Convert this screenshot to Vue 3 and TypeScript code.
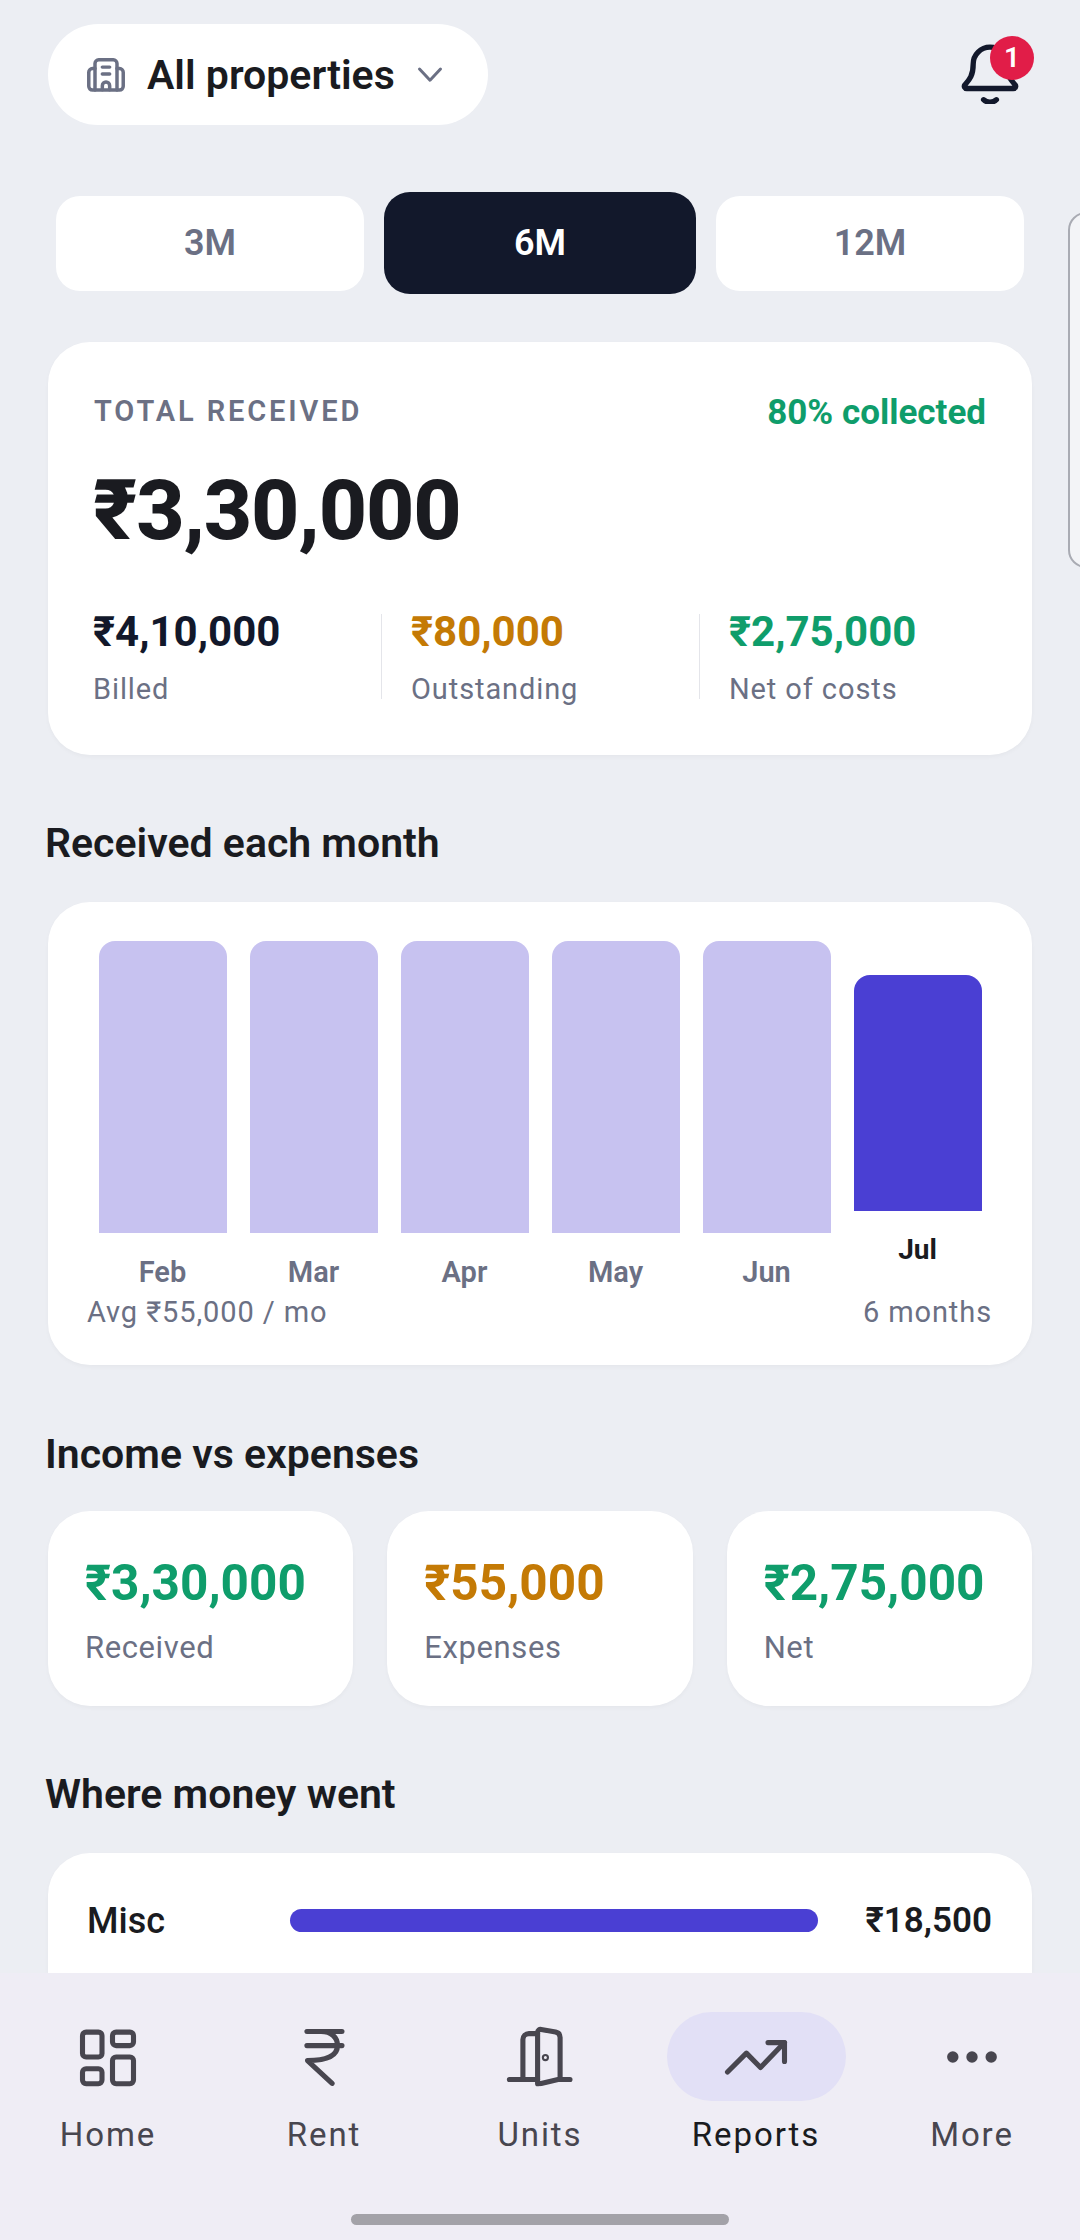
<script setup lang="ts">
type Bar = { label: string; value: number; current?: boolean }
type Tile = { value: string; label: string; tone: string }
type NavItem = { key: string; label: string; active?: boolean }

const ranges = ['3M', '6M', '12M']
const activeRange = '6M'

const splits: Tile[] = [
  { value: '₹4,10,000', label: 'Billed', tone: 'navy' },
  { value: '₹80,000', label: 'Outstanding', tone: 'amber' },
  { value: '₹2,75,000', label: 'Net of costs', tone: 'green' }
]

const bars: Bar[] = [
  { label: 'Feb', value: 55000 },
  { label: 'Mar', value: 55000 },
  { label: 'Apr', value: 55000 },
  { label: 'May', value: 55000 },
  { label: 'Jun', value: 55000 },
  { label: 'Jul', value: 44500, current: true }
]

const BAR_MAX = 292
const barHeight = (v: number) => `${Math.round((v / 55000) * BAR_MAX)}px`

const tiles: Tile[] = [
  { value: '₹3,30,000', label: 'Received', tone: 'green' },
  { value: '₹55,000', label: 'Expenses', tone: 'amber' },
  { value: '₹2,75,000', label: 'Net', tone: 'green' }
]

const nav: NavItem[] = [
  { key: 'home', label: 'Home' },
  { key: 'rent', label: 'Rent' },
  { key: 'units', label: 'Units' },
  { key: 'reports', label: 'Reports', active: true },
  { key: 'more', label: 'More' }
]
</script>

<template>
  <div class="screen">
    <main class="content">
      <header class="topbar">
        <button class="picker" type="button">
          <svg class="picker-icon" viewBox="0 0 24 24" fill="none" stroke="currentColor" stroke-width="1.900" stroke-linecap="round" stroke-linejoin="round">
            <path d="M6 20.200V5.700a2 2 0 0 1 2-2h8a2 2 0 0 1 2 2v14.500" />
            <path d="M6 8.500H4.600a2 2 0 0 0-2 2v7.700a2 2 0 0 0 2 2h14.800a2 2 0 0 0 2-2v-7.700a2 2 0 0 0-2-2H18" />
            <path d="M10 7.700h4M10 11.500h4M10 20v-2.200a2 2 0 0 1 4 0V20" />
          </svg>
          <span>All properties</span>
          <svg class="picker-chevron" viewBox="0 0 24 24" fill="none" stroke="currentColor" stroke-width="2" stroke-linecap="round" stroke-linejoin="round">
            <path d="m5 8 7 7.500 7-7.500" />
          </svg>
        </button>
        <div class="bell">
          <svg viewBox="0 0 24 24" fill="none" stroke="currentColor" stroke-width="2" stroke-linecap="round" stroke-linejoin="round">
            <path d="M2.600 16.800c-.5.6-.1 1.400.7 1.400h17.400c.8 0 1.200-.8.7-1.400C19.800 15 18.300 13.500 18.300 9a6.300 6.300 0 0 0-12.600 0c0 4.500-1.500 6-3.100 7.800Z" />
            <path d="M9.600 22.400c1.200 1.200 3.600 1.200 4.800 0" />
          </svg>
          <span class="bell-badge">1</span>
        </div>
      </header>

      <div class="ranges">
        <button
          v-for="r in ranges"
          :key="r"
          type="button"
          class="range"
          :class="{ active: r === activeRange }"
        >
          {{ r }}
        </button>
      </div>
      <div class="peek"></div>

      <section class="card hero">
        <div class="hero-top">
          <span class="eyebrow">TOTAL RECEIVED</span>
          <span class="collected">80% collected</span>
        </div>
        <div class="hero-value">₹3,30,000</div>
        <div class="splits">
          <div v-for="s in splits" :key="s.label" class="split">
            <strong :class="s.tone">{{ s.value }}</strong>
            <span>{{ s.label }}</span>
          </div>
        </div>
      </section>

      <h2 class="heading heading-months">Received each month</h2>
      <section class="card chart">
        <div class="bars">
          <div v-for="b in bars" :key="b.label" class="bar-col" :class="{ current: b.current }">
            <div class="bar" :style="{ height: barHeight(b.value) }"></div>
            <span class="bar-label">{{ b.label }}</span>
          </div>
        </div>
        <div class="chart-foot">
          <span>Avg ₹55,000 / mo</span>
          <span>6 months</span>
        </div>
      </section>

      <h2 class="heading heading-income">Income vs expenses</h2>
      <div class="tiles">
        <div v-for="t in tiles" :key="t.label" class="card tile">
          <strong :class="t.tone">{{ t.value }}</strong>
          <span>{{ t.label }}</span>
        </div>
      </div>

      <h2 class="heading heading-money">Where money went</h2>
      <section class="card money">
        <div class="money-row">
          <span class="money-name">Misc</span>
          <div class="money-track"></div>
          <span class="money-amount">₹18,500</span>
        </div>
      </section>
    </main>

    <nav class="nav">
      <div class="nav-items">
        <div v-for="n in nav" :key="n.key" class="nav-item" :class="{ active: n.active }">
          <div class="nav-icon">
            <svg v-if="n.key === 'home'" viewBox="0 0 24 24" fill="none" stroke="currentColor" stroke-width="1.700" stroke-linecap="round" stroke-linejoin="round">
              <rect x="3.500" y="3.700" width="6.500" height="8.300" rx="1.200" />
              <rect x="13.500" y="3.700" width="7" height="4.500" rx="1.200" />
              <rect x="13.500" y="12" width="7" height="8.900" rx="1.200" />
              <rect x="3.500" y="15.900" width="6.500" height="5" rx="1.200" />
            </svg>
            <svg v-else-if="n.key === 'rent'" viewBox="0 0 24 24" fill="none" stroke="currentColor" stroke-width="1.700" stroke-linecap="round" stroke-linejoin="round">
              <path d="M6.300 3.500H18M6.300 8.200H18M11 3.500c3.500 0 5.500 2 5.500 4.700s-2.500 5-10 5l8.200 7.600" />
            </svg>
            <svg v-else-if="n.key === 'units'" viewBox="0 0 24 24" fill="none" stroke="currentColor" stroke-width="1.700" stroke-linecap="round" stroke-linejoin="round">
              <path d="M1.800 19.500h9.400M18.700 19.500H22" />
              <path d="M6.300 19.500V6.200a2 2 0 0 1 2-2h2.900" />
              <path d="M11.200 20.900V3.800c0-.7.6-1.100 1.200-1l4.800.9c.9.2 1.500.9 1.500 1.800v13.800l-6.300 1.500c-.7.2-1.200-.1-1.200-.8Z" />
              <circle cx="13.800" cy="12.200" r=".35" />
            </svg>
            <svg v-else-if="n.key === 'reports'" viewBox="0 0 24 24" fill="none" stroke="currentColor" stroke-width="1.700" stroke-linecap="round" stroke-linejoin="round">
              <path d="M2.500 17 8.800 10.700 13.500 15.500 21.500 7.200" />
              <path d="M16 7.200h5.500v6.300" />
            </svg>
            <svg v-else viewBox="0 0 24 24" fill="currentColor">
              <circle cx="5.600" cy="12" r="1.900" />
              <circle cx="12" cy="12" r="1.900" />
              <circle cx="18.400" cy="12" r="1.900" />
            </svg>
          </div>
          <span class="nav-label">{{ n.label }}</span>
        </div>
      </div>
      <div class="home-indicator"></div>
    </nav>
  </div>
</template>

<style>
body {
  margin: 0;
}
</style>

<style scoped>
.screen {
  position: relative;
  width: 1080px;
  height: 2240px;
  display: flex;
  flex-direction: column;
  overflow: hidden;
  background: #eceef3;
  color: #1a1b20;
  font-family: Roboto, 'Liberation Sans', sans-serif;
}
.content {
  position: relative;
  flex: 1;
  min-height: 0;
  overflow: hidden;
  padding: 24px 48px 0;
}
.topbar {
  display: flex;
  align-items: flex-start;
  justify-content: space-between;
}
.picker {
  display: flex;
  align-items: center;
  width: 440px;
  height: 101px;
  padding: 0 0 0 36px;
  border: 0;
  border-radius: 51px;
  background: #fff;
  font: 600 41px Roboto, sans-serif;
  color: #1a1b20;
}
.picker-icon {
  width: 44px;
  height: 44px;
  color: #6b7084;
  margin-right: 19px;
}
.picker-chevron {
  width: 36px;
  height: 36px;
  color: #6b7084;
  margin-left: 17px;
}
.bell {
  position: relative;
  width: 64px;
  height: 64px;
  margin: 16px 10px 0 0;
  color: #12182b;
}
.bell svg {
  width: 64px;
  height: 64px;
  display: block;
}
.bell-badge {
  position: absolute;
  top: -4px;
  right: -12px;
  width: 44px;
  height: 44px;
  border-radius: 50%;
  background: #e11d48;
  color: #fff;
  font-size: 28px;
  font-weight: 600;
  line-height: 44px;
  text-align: center;
}
.ranges {
  display: flex;
  align-items: center;
  gap: 20px;
  height: 102px;
  margin: 67px 0 0 8px;
}
.range {
  width: 308px;
  height: 95px;
  border: 0;
  border-radius: 24px;
  background: #fff;
  color: #6b7084;
  font: 600 36px Roboto, sans-serif;
}
.range.active {
  width: 312px;
  height: 102px;
  border-radius: 26px;
  background: #12182b;
  color: #fff;
}
.peek {
  position: absolute;
  left: 1068px;
  top: 212px;
  width: 60px;
  height: 356px;
  box-sizing: border-box;
  border: 2px solid #a9abb3;
  border-radius: 18px;
  background: #f3f4f7;
}
.card {
  background: #fff;
  border-radius: 42px;
  box-shadow: 0 2px 4px rgba(18, 24, 43, 0.03);
}
.hero {
  height: 413px;
  box-sizing: border-box;
  margin-top: 48px;
  padding: 54px 46px 0;
}
.hero-top {
  display: flex;
  align-items: center;
  justify-content: space-between;
  height: 30px;
}
.eyebrow {
  font-size: 29px;
  font-weight: 600;
  letter-spacing: 2.900px;
  color: #6b7084;
}
.collected {
  padding-top: 3px;
  font-size: 35px;
  font-weight: 700;
  color: #0f9d6b;
}
.hero-value {
  margin-top: 35px;
  margin-left: -1px;
  font-size: 84px;
  font-weight: 800;
  line-height: 100px;
  letter-spacing: -1.200px;
  color: #1a1b20;
}
.splits {
  display: grid;
  grid-template-columns: 288px 318px 1fr;
  margin: 53px 0 0 -1px;
}
.split {
  display: flex;
  flex-direction: column;
  height: 85px;
}
.split + .split {
  padding-left: 29px;
  border-left: 1px solid #e4e5ea;
}
.split strong {
  font-size: 42px;
  font-weight: 700;
  line-height: 36px;
}
.split span {
  margin-top: 22px;
  font-size: 29px;
  line-height: 34px;
  letter-spacing: 0.900px;
  color: #6b7084;
}
.navy {
  color: #12182b;
}
.amber {
  color: #c47a05;
}
.green {
  color: #0f9d6b;
}
.heading {
  margin: 0;
  font-size: 41px;
  font-weight: 600;
  line-height: 46px;
  color: #1a1b20;
}
.heading-months {
  margin: 65px 0 0 -3px;
}
.chart {
  height: 463px;
  box-sizing: border-box;
  margin-top: 36px;
  padding: 39px 40px 0;
}
.bars {
  display: flex;
  gap: 23px;
  height: 352px;
  padding: 0 10.500px;
}
.bar-col {
  flex: 1;
  display: flex;
  flex-direction: column;
  align-items: center;
}
.bar-col.current {
  margin-top: 34px;
}
.bar {
  width: 100%;
  border-radius: 16px 16px 0 0;
  background: #c7c2f0;
}
.current .bar {
  background: #4a3fd3;
}
.bar-label {
  margin-top: 22px;
  font-size: 29px;
  font-weight: 600;
  line-height: 34px;
  color: #6b7084;
}
.current .bar-label {
  color: #1a1b20;
  font-weight: 700;
  font-size: 28px;
}
.chart-foot {
  display: flex;
  justify-content: space-between;
  margin-top: 2px;
  margin-left: -1px;
  font-size: 29px;
  line-height: 34px;
  letter-spacing: 0.900px;
  color: #6b7084;
}
.heading-income {
  margin: 66px 0 0 -3px;
}
.tiles {
  display: grid;
  grid-template-columns: repeat(3, 1fr);
  gap: 34px;
  margin-top: 34px;
}
.tile {
  display: flex;
  flex-direction: column;
  height: 195px;
  box-sizing: border-box;
  padding: 45px 0 0 37px;
}
.tile strong {
  font-size: 49.500px;
  font-weight: 700;
  line-height: 54px;
}
.tile span {
  margin-top: 20px;
  font-size: 31px;
  line-height: 36px;
  letter-spacing: 0.600px;
  color: #6b7084;
}
.heading-money {
  margin: 65px 0 0 -3px;
}
.money {
  margin-top: 36px;
  height: 160px;
  box-sizing: border-box;
  padding: 47px 40px 0;
}
.money-row {
  display: grid;
  grid-template-columns: 202px 528px 1fr;
  align-items: center;
}
.money-name {
  margin-left: -1px;
  font-size: 36px;
  font-weight: 500;
  line-height: 40px;
}
.money-track {
  height: 23px;
  border-radius: 12px;
  background: #4a3fd3;
}
.money-amount {
  font-size: 35px;
  font-weight: 600;
  text-align: right;
}
.nav {
  position: relative;
  height: 267px;
  flex-shrink: 0;
  background: #efedf5;
}
.nav-items {
  display: grid;
  grid-template-columns: repeat(5, 216px);
  padding-top: 39px;
}
.nav-item {
  display: flex;
  flex-direction: column;
  align-items: center;
  color: #48464f;
}
.nav-icon {
  display: flex;
  align-items: center;
  justify-content: center;
  width: 179px;
  height: 89px;
  border-radius: 45px;
}
.nav-icon svg {
  width: 72px;
  height: 72px;
}
.nav-item.active .nav-icon {
  background: #e2e0f6;
}
.nav-label {
  margin-top: 14px;
  font-size: 33px;
  font-weight: 450;
  line-height: 40px;
  letter-spacing: 1.900px;
}
.nav-item.active .nav-label {
  color: #1a1b20;
}
.home-indicator {
  position: absolute;
  left: 351px;
  bottom: 15px;
  width: 378px;
  height: 11px;
  border-radius: 6px;
  background: #a3a2a8;
}
</style>
